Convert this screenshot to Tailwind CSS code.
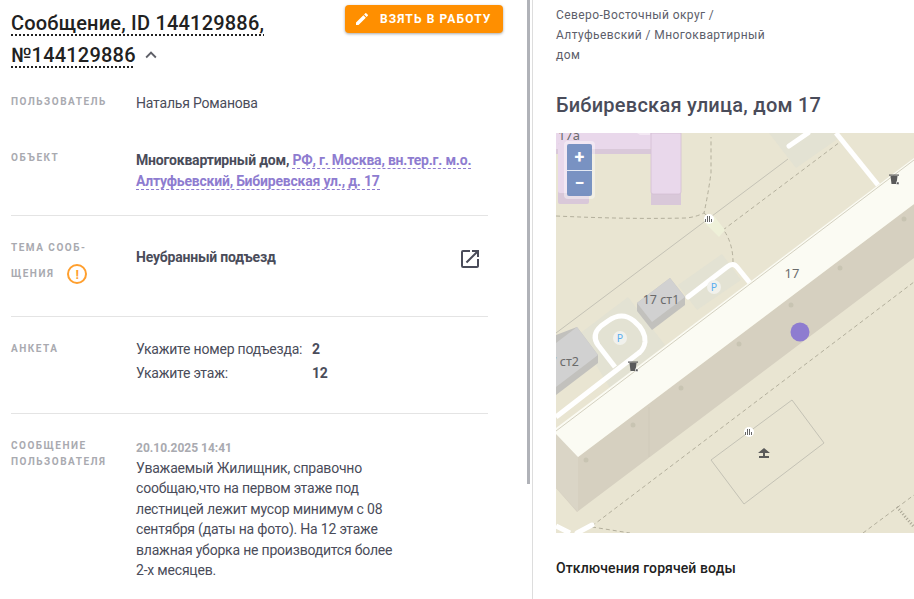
<!DOCTYPE html>
<html lang="ru">
<head>
    <meta charset="UTF-8">
    <title>Сообщение, ID 144129886</title>
    <script src="https://cdn.jsdelivr.net/npm/@tailwindcss/browser@4"></script>
</head>
<body class="bg-white overflow-hidden font-['Roboto',sans-serif] text-[#4a4c5a]">
<div class="flex w-[914px] h-[599px] overflow-hidden">

    <!-- левая колонка -->
    <div class="relative w-[532px] h-full shrink-0 pl-[11px] pr-[44px] overflow-hidden">
        <div class="absolute right-[2px] top-0 w-[3px] h-[484px] bg-[#b0b2b8]"></div>

        <div class="flex justify-between items-start h-[70px]">
            <h1 class="w-[300px] pt-[7px] text-[20px] leading-[32px] font-medium text-[#212121] tracking-[0.2px]">
                <span class="underline decoration-dotted decoration-[#212121] decoration-2 underline-offset-[4px]">Сообщение, ID 144129886, №144129886</span>
                <svg class="inline-block -ml-[1px] align-[-4px]" width="22" height="22" viewBox="0 0 24 24" fill="#5f6068"><path d="M7.41 15.41 12 10.83l4.59 4.58L18 14l-6-6-6 6z"/></svg>
            </h1>
            <button class="flex items-center h-[28px] w-[158px] mt-[5px] -mr-[15px] pl-[9px] rounded bg-[#ff8f00] text-white text-[12px] font-bold tracking-[1.1px] shadow-[0_1px_3px_rgba(0,0,0,0.35)]">
                <svg class="mr-[10px]" width="16" height="16" viewBox="0 0 24 24" fill="#fff"><path d="M3 17.25V21h3.75L17.81 9.94l-3.75-3.75L3 17.25zM20.71 7.04a1 1 0 0 0 0-1.41l-2.34-2.34a1 1 0 0 0-1.41 0l-1.83 1.83 3.75 3.75 1.83-1.83z"/></svg>
                ВЗЯТЬ В РАБОТУ
            </button>
        </div>

        <div class="flex h-[53px] pt-[23px]">
            <div class="w-[125px] shrink-0 text-[10px] leading-[18px] font-bold tracking-[1.5px] text-[#a9aab0]">ПОЛЬЗОВАТЕЛЬ</div>
            <div class="text-[14px] leading-[21px] tracking-[-0.2px]">Наталья Романова</div>
        </div>

        <div class="flex h-[93px] pt-[26px] border-b border-[#e4e4e4] w-[477px]">
            <div class="w-[125px] shrink-0 text-[10px] leading-[18px] font-bold tracking-[1.5px] text-[#a9aab0]">ОБЪЕКТ</div>
            <div class="w-[345px] mt-[1px] text-[14px] leading-[21px] font-bold tracking-[-0.2px]">Многоквартирный дом, <a class="text-[#8e7cd0] border-b border-dashed border-[#8e7cd0]">РФ, г. Москва, вн.тер.г. м.о. Алтуфьевский, Бибиревская ул., д. 17</a></div>
        </div>

        <div class="flex h-[101px] pt-[19px] border-b border-[#e4e4e4] w-[477px]">
            <div class="w-[125px] shrink-0 text-[10px] leading-[26px] font-bold tracking-[1.5px] text-[#a9aab0]">
                ТЕМА СООБ-<br>
                <span class="inline-flex items-center">ЩЕНИЯ
                    <span class="flex items-center justify-center w-[20px] h-[20px] ml-[13px] rounded-full border-2 border-[#ff9f2e] text-[#ff9f2e] text-[13px] font-bold leading-none tracking-normal">!</span>
                </span>
            </div>
            <div class="flex-1 pt-[12px] text-[14px] leading-[21px] font-bold tracking-[-0.2px]">Неубранный подъезд</div>
            <svg class="mr-[6px] mt-[12px]" width="24" height="24" viewBox="0 0 24 24" fill="#4a4c5a"><path d="M19 19H5V5h7V3H5a2 2 0 0 0-2 2v14a2 2 0 0 0 2 2h14c1.1 0 2-.9 2-2v-7h-2v7zM14 3v2h3.59l-9.83 9.83 1.41 1.41L19 6.41V10h2V3h-7z"/></svg>
        </div>

        <div class="flex h-[97px] pt-[23px] border-b border-[#e4e4e4] w-[477px]">
            <div class="w-[125px] shrink-0 text-[10px] leading-[18px] font-bold tracking-[1.5px] text-[#a9aab0]">АНКЕТА</div>
            <div class="text-[14px] leading-[24px] -mt-[3px] tracking-[-0.2px]">
                <div class="flex"><span class="w-[176px]">Укажите номер подъезда:</span><b>2</b></div>
                <div class="flex"><span class="w-[176px]">Укажите этаж:</span><b>12</b></div>
            </div>
        </div>

        <div class="flex pt-[24px]">
            <div class="w-[125px] shrink-0 text-[10px] leading-[16px] font-bold tracking-[1.5px] text-[#a9aab0]">СООБЩЕНИЕ<br>ПОЛЬЗОВАТЕЛЯ</div>
            <div class="w-[262px] text-[14px] leading-[20.4px] tracking-[-0.2px]">
                <div class="text-[12px] font-bold text-[#a9aab0] leading-[20px] tracking-normal">20.10.2025 14:41</div>
                Уважаемый Жилищник, справочно сообщаю,что на первом этаже под лестницей лежит мусор минимум с 08 сентября (даты на фото). На 12 этаже влажная уборка не производится более 2-х месяцев.
            </div>
        </div>
    </div>

    <!-- правая колонка -->
    <div class="flex-1 min-w-0 border-l border-[#dddddd] pl-[23px]">
        <p class="w-[225px] pt-[5px] text-[12px] leading-[20px] tracking-[0.4px] text-[#5c5e6a]">Северо-Восточный округ / Алтуфьевский / Многоквартирный дом</p>
        <h2 class="mt-[26px] text-[20px] leading-[28px] font-medium tracking-[0.25px]">Бибиревская улица, дом 17</h2>

        <!-- карта -->
        <div class="relative mt-[14px] w-[358px] h-[400px] overflow-hidden bg-[#e9e5d2]">
            <svg class="absolute inset-0" width="358" height="400" viewBox="556 133 358 400" font-family="'Noto Sans',sans-serif">
                <!-- розовые дома -->
                <path d="M556 149H651V133H681V205H651V154H556Z" fill="#d9c8d9"/>
                <path d="M556 133H651V147Q651 149 649 149H556Z" fill="#e9d8eb"/>
                <path d="M651 133H681V192Q681 194 679 194H653Q651 194 651 192Z" fill="#e9d8eb" stroke="#d3bfd3" stroke-width="0.8"/>
                <path d="M637 133H650V135H640Z" fill="#f3e8f3"/>
                <rect x="558" y="143" width="31" height="61" rx="2" fill="#d9c8d9"/>
                <rect x="558" y="143" width="31" height="50" rx="2" fill="#e9d8eb"/>
                <text x="569" y="140" font-size="13" fill="#6b6b6b" text-anchor="middle">17а</text>

                <!-- площадки -->
                <path d="M769 133L796 168L839 138L834 133Z" fill="#e3e2d3"/>
                <path d="M628 297L665 345L610 388L578 335Z" fill="#e3e2d3"/>
                <path d="M722 254L741 280L697 310L678 285Z" fill="#e3e2d3"/>

                <!-- линии -->
                <path d="M556 333L788 159" stroke="#c4c2b5" stroke-width="1" fill="none"/>
                <path d="M556 216C600 218 640 219 686 218Q696 217 704 213Q708 195 711 173V137" stroke="#b3af9c" stroke-width="1" stroke-dasharray="4 3" fill="none"/>
                <path d="M704 213L725 232Q733 245 733 262" stroke="#b3af9c" stroke-width="1" stroke-dasharray="4 3" fill="none"/>
                <path d="M723 230L840 142" stroke="#b3af9c" stroke-width="1" stroke-dasharray="4 3" fill="none"/>
                <path d="M592 526L914 282" stroke="#b3af9c" stroke-width="1" stroke-dasharray="4 3" fill="none"/>
                <path d="M592 527L630 533" stroke="#b3af9c" stroke-width="1" stroke-dasharray="4 3" fill="none"/>
                <path d="M863 533L914 495" stroke="#b3af9c" stroke-width="1" stroke-dasharray="4 3" fill="none"/>
                <path d="M897 507L914 527" stroke="#a8a493" stroke-width="3" stroke-dasharray="1 2" fill="none"/>
                <path d="M711 460L792 400L824 443L744 504Z" fill="none" stroke="#c4c2b5" stroke-width="1"/>

                <!-- переход -->
                <path d="M704 222L714 216L725 230L719 237Z" fill="#eef0d8"/>
                <circle cx="709" cy="219" r="5" fill="#fff"/>
                <path d="M705.5 222v-3M707.5 222v-6M709.5 222v-6M711.5 222v-3" stroke="#666" stroke-width="1"/>

                <!-- дороги -->
                <path d="M808 133L789 146" stroke="#fff" stroke-width="5" stroke-linecap="round" fill="none"/>
                <path d="M836 133L878 185" stroke="#fff" stroke-width="5" fill="none"/>
                <path d="M688 297L727 267Q733 262 737 267L750 283" stroke="#fff" stroke-width="5" stroke-linecap="round" fill="none"/>
                <path d="M556 417L640 352" stroke="#fff" stroke-width="5" fill="none"/>
                <path d="M615 367L598 345Q591 335 601 326L608 321Q622 311 634 321Q646 331 645 342Q644 349 639 353" stroke="#fff" stroke-width="5" fill="none"/>
                <path d="M577 533L592 525" stroke="#fff" stroke-width="5" stroke-linecap="round" fill="none"/>
                <path d="M556 526L570 533" stroke="#fff" stroke-width="5" fill="none"/>

                <!-- серые строения -->
                <path d="M637 303L670 278L685 297V305L652 330L637 311Z" fill="#c2c1bd"/>
                <path d="M637 303L670 278L685 297L652 322Z" fill="#d1d1d1"/>
                <path d="M556 335L577 327L598 355V363L556 395Z" fill="#c2c1bd"/>
                <path d="M556 343L577 327L598 355L556 387Z" fill="#d1d1d1"/>
                <text x="661" y="304" font-size="12.5" fill="#6b6b6b" text-anchor="middle">17 ст1</text>
                <text x="579" y="366" font-size="12.5" fill="#6b6b6b" text-anchor="end">17 ст2</text>

                <!-- парковки -->
                <circle cx="714" cy="287" r="7" fill="#f1f1ec"/>
                <circle cx="620" cy="338" r="7" fill="#f1f1ec"/>
                <text x="714" y="291" font-size="10.5" fill="#5baef0" text-anchor="middle">P</text>
                <text x="620" y="342" font-size="10.5" fill="#5baef0" text-anchor="middle">P</text>

                <!-- основной дом -->
                <path d="M556 432L578 457L914 204V258L577 512L556 488Z" fill="#d6d0c0"/>
                <path d="M556 432L578 457V512L556 488Z" fill="#dad5c6"/>
                <path d="M649 407V457" stroke="#cfc9b9" stroke-width="0.8"/>
                <path d="M556 434V428L914 158V204L578 457Z" fill="#fbfbf3"/>
                <path d="M556 431L914 160" stroke="#c9c5b3" stroke-width="0.8" fill="none"/>
                <g fill="#c8c4b2">
                    <circle cx="904" cy="219" r="2.5"/>
                    <circle cx="840" cy="268" r="2.5"/>
                    <circle cx="791" cy="305" r="2.5"/>
                    <circle cx="739" cy="344" r="2.5"/>
                    <circle cx="681" cy="388" r="2.5"/>
                    <circle cx="633" cy="425" r="2.5"/>
                    <circle cx="586" cy="460" r="2.5"/>
                </g>
                <text x="792" y="278" font-size="13" fill="#6b6b6b" text-anchor="middle">17</text>

                <!-- значки -->
                <path d="M890.5 176H897.5L896.5 184H891.5Z" fill="#5a5a5a"/>
                <rect x="889" y="174.5" width="10" height="1.2" fill="#5a5a5a"/>
                <rect x="896.5" y="182" width="2.5" height="2.5" fill="#5a5a5a" stroke="#fff" stroke-width="0.5"/>
                <path d="M629.5 363H636.5L635.5 371H630.5Z" fill="#5a5a5a"/>
                <rect x="628" y="361.5" width="10" height="1.2" fill="#5a5a5a"/>
                <rect x="635.5" y="369" width="2.5" height="2.5" fill="#5a5a5a" stroke="#fff" stroke-width="0.5"/>
                <circle cx="749" cy="432" r="5" fill="#fff"/>
                <path d="M745.5 435v-3M747.5 435v-6M749.5 435v-6M751.5 435v-3" stroke="#666" stroke-width="1"/>
                <path d="M764 448L770 453H758ZM763 453h2v4h-2ZM759 456h10v2h-10Z" fill="#5a5a5a"/>

                <circle cx="800" cy="332" r="9.5" fill="#8e7cd0"/>
            </svg>

            <!-- масштаб -->
            <div class="absolute left-[8px] top-[8px] p-[3px] rounded bg-white/40">
                <div class="flex flex-col w-[25px] h-[52px] rounded-[2px] bg-[#6b88bd]/90 text-white font-bold">
                    <div class="flex-1 flex items-center justify-center text-[18px] leading-none border-b border-white/80">+</div>
                    <div class="flex-1 flex items-center justify-center text-[18px] leading-none">−</div>
                </div>
            </div>
        </div>

        <h3 class="mt-[25px] text-[14px] leading-[20px] font-medium tracking-[0.1px] text-[#212121]">Отключения горячей воды</h3>
    </div>
</div>
</body>
</html>
